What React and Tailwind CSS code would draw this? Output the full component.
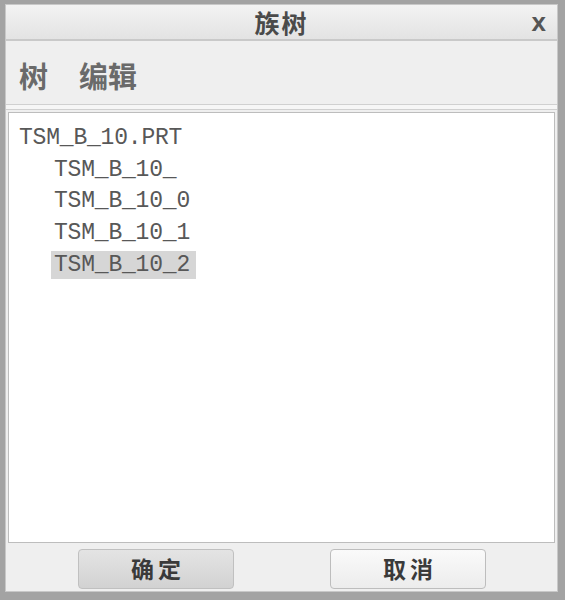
export default function App() {
  const cjk = { fontFamily: '"Noto Sans CJK SC", "Noto Sans", sans-serif' };
  const mono = { fontFamily: '"Liberation Mono", "DejaVu Sans Mono", monospace' };
  return (
    <div className="w-[565px] h-[600px] bg-[#a3a3a3] pt-[4px] pl-[5px] pr-[7px] pb-[8px]">
      <div className="w-full h-full flex flex-col bg-[#efefef] border border-[#c8c8c8]">
        {/* title bar */}
        <div className="h-[36px] flex items-center relative bg-gradient-to-b from-[#f3f3f3] to-[#e3e3e3] border-b-2 border-[#c9c9c9]" style={cjk}>
          <div className="flex-1 text-center text-[25px] font-bold text-[#4a4a4a] leading-none tracking-[2px]">族树</div>
          <div className="absolute right-[11px] top-[4px] text-[26px] font-bold text-[#555] leading-none" style={{ fontFamily: '"Liberation Sans", sans-serif' }}>x</div>
        </div>
        {/* menu */}
        <div className="h-[64px] flex items-center gap-[31px] pl-[13px] pt-[6px] border-b border-[#d0d0d0]" style={cjk}>
          <span className="text-[29px] font-bold text-[#6a6a6a] leading-none">树</span>
          <span className="text-[29px] font-bold text-[#6a6a6a] leading-none">编辑</span>
        </div>
        <div className="h-[5px] border-b border-[#d0d0d0] bg-[#f6f6f6]" />
        {/* tree */}
        <div className="flex-1 mx-[2px] mt-[2px] bg-white border border-[#bdbdbd] pt-[10px] pl-[10px]" style={mono}>
          <div className="text-[23px] text-[#585858] leading-[31.5px] tracking-[-0.2px]">
            <div>TSM_B_10.PRT</div>
            <div className="pl-[35px]">TSM_B_10_</div>
            <div className="pl-[35px]">TSM_B_10_0</div>
            <div className="pl-[35px]">TSM_B_10_1</div>
            <div className="pl-[32px]">
              <span className="bg-[#d6d6d6] pl-[3px] pr-[6px] inline-block leading-[28px] align-top mt-[2px]">TSM_B_10_2</span>
            </div>
          </div>
        </div>
        {/* buttons */}
        <div className="h-[48px] flex items-center pl-[72px] gap-[96px] pt-[3px]" style={cjk}>
          <button className="w-[156px] h-[40px] rounded-[4px] border border-[#c0c0c0] bg-gradient-to-b from-[#e4e4e4] to-[#d2d2d2] text-[23px] font-bold text-[#3a3a3a] tracking-[4px] pl-[4px]">确定</button>
          <button className="w-[156px] h-[40px] rounded-[4px] border border-[#bdbdbd] bg-gradient-to-b from-[#fafafa] to-[#ececec] text-[23px] font-bold text-[#3a3a3a] tracking-[4px] pl-[4px]">取消</button>
        </div>
      </div>
    </div>
  );
}
